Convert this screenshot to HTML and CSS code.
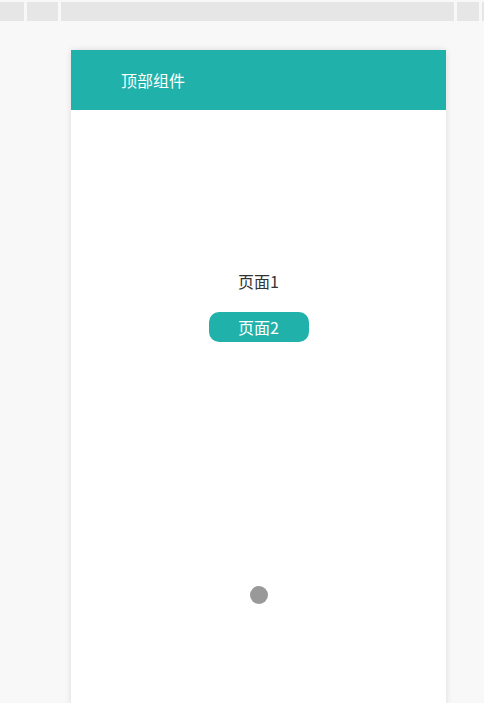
FILE: index.html
```html
<!DOCTYPE html>
<html lang="zh">
<head>
<meta charset="utf-8">
<title>顶部组件</title>
<link rel="stylesheet" href="styles.css">
</head>
<body>
<div class="topbar">
  <div class="seg seg-a"></div>
  <div class="seg seg-b"></div>
  <div class="seg seg-c"></div>
  <div class="seg seg-d"></div>
  <div class="seg seg-e"></div>
</div>
<div class="phone">
  <header class="header">顶部组件</header>
  <main class="content">
    <div class="page-label">页面1</div>
    <button class="page-btn">页面2</button>
    <div class="dot"></div>
  </main>
</div>
</body>
</html>
```
FILE: styles.css
```css
html, body {
  margin: 0;
  padding: 0;
}
body {
  background: #f8f8f8;
  font-family: "Noto Sans CJK SC", "Noto Sans", sans-serif;
  height: 703px;
  overflow: hidden;
}
.topbar {
  display: flex;
  gap: 3px;
  margin-top: 2px;
  height: 19px;
}
.seg {
  background: #e6e6e6;
  height: 100%;
}
.seg-a { width: 24px; }
.seg-b { width: 31px; }
.seg-c { width: 393px; }
.seg-d { width: 22px; }
.seg-e { flex: 1; }
.phone {
  width: 375px;
  height: 667px;
  margin: 29px 0 0 71px;
  background: #fff;
  box-shadow: 0 0 6px rgba(0, 0, 0, 0.12);
  display: flex;
  flex-direction: column;
}
.header {
  height: 60px;
  background: #20b2aa;
  color: #fff;
  font-size: 16px;
  padding-left: 50px;
  display: flex;
  align-items: center;
}
.content {
  display: flex;
  flex-direction: column;
  align-items: center;
  padding-top: 160px;
}
.page-label {
  font-size: 16px;
  line-height: 22px;
  color: #333;
  margin-bottom: 20px;
}
.page-btn {
  width: 100px;
  height: 30px;
  border: none;
  border-radius: 10px;
  background: #20b2aa;
  color: #fff;
  font-family: inherit;
  font-size: 16px;
  padding: 0;
  line-height: 30px;
}
.dot {
  width: 18px;
  height: 18px;
  border-radius: 50%;
  background: #999;
  margin-top: 244px;
}
```
